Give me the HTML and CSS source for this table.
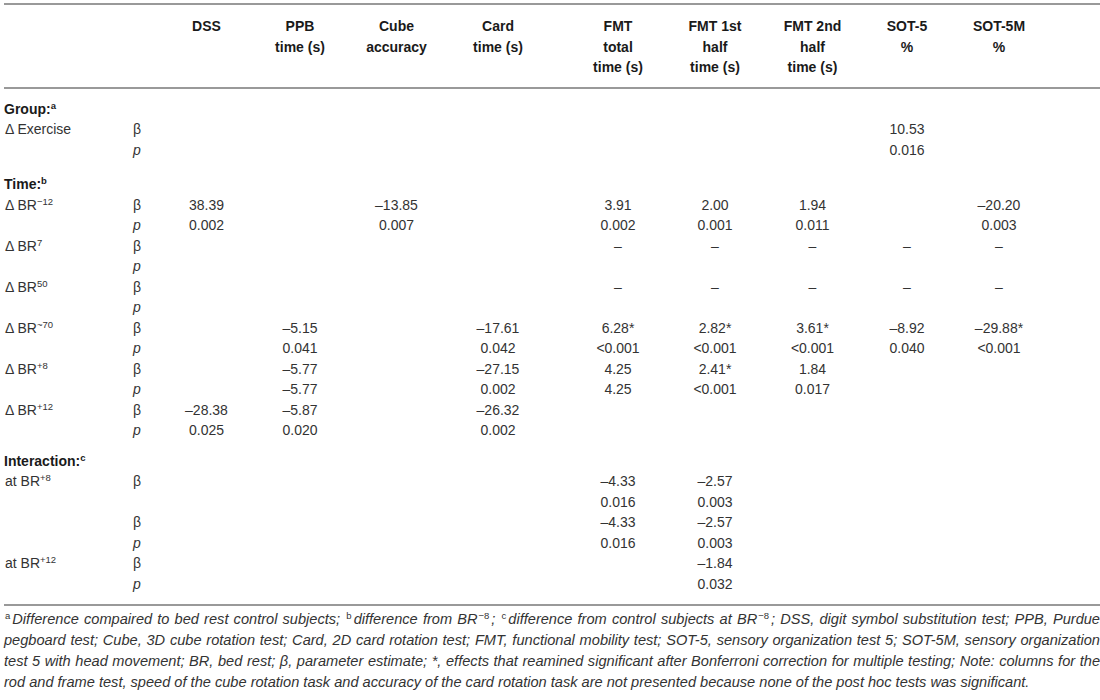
FILE: index.html
```html
<!DOCTYPE html>
<html lang="en">
<head>
    <meta charset="UTF-8">
    <meta name="viewport" content="width=device-width, initial-scale=1.0">
    <title>Post hoc tests</title>
    <link rel="stylesheet" href="styles.css">
</head>
<body>
    <div class="wrap">
        <table class="stats">
            <colgroup>
                <col class="c-lbl">
                <col class="c-sym">
                <col class="c-dss">
                <col class="c-ppb">
                <col class="c-cube">
                <col class="c-card">
                <col class="c-fmt">
                <col class="c-fmt1">
                <col class="c-fmt2">
                <col class="c-sot">
                <col class="c-sotm">
                <col class="c-fill">
            </colgroup>
            <thead>
                <tr>
                    <th></th>
                    <th></th>
                    <th>DSS</th>
                    <th>PPB<br>time (s)</th>
                    <th>Cube<br>accuracy</th>
                    <th>Card<br>time (s)</th>
                    <th>FMT<br>total<br>time (s)</th>
                    <th>FMT 1st<br>half<br>time (s)</th>
                    <th>FMT 2nd<br>half<br>time (s)</th>
                    <th>SOT-5<br>%</th>
                    <th>SOT-5M<br>%</th>
                    <th></th>
                </tr>
            </thead>
            <tbody>
                <!-- Group -->
                <tr><td class="sec first" colspan="12">Group:<sup>a</sup></td></tr>
                <tr><td class="lbl">Δ Exercise</td><td class="sym">β</td><td></td><td></td><td></td><td></td><td></td><td></td><td></td><td>10.53</td><td></td><td></td></tr>
                <tr><td class="lbl"></td><td class="sym"><i>p</i></td><td></td><td></td><td></td><td></td><td></td><td></td><td></td><td>0.016</td><td></td><td></td></tr>

                <!-- Time -->
                <tr><td class="sec" colspan="12">Time:<sup>b</sup></td></tr>
                <tr><td class="lbl">Δ BR<sup>−12</sup></td><td class="sym">β</td><td>38.39</td><td></td><td>–13.85</td><td></td><td>3.91</td><td>2.00</td><td>1.94</td><td></td><td>–20.20</td><td></td></tr>
                <tr><td class="lbl"></td><td class="sym"><i>p</i></td><td>0.002</td><td></td><td>0.007</td><td></td><td>0.002</td><td>0.001</td><td>0.011</td><td></td><td>0.003</td><td></td></tr>
                <tr><td class="lbl">Δ BR<sup>7</sup></td><td class="sym">β</td><td></td><td></td><td></td><td></td><td>–</td><td>–</td><td>–</td><td>–</td><td>–</td><td></td></tr>
                <tr><td class="lbl"></td><td class="sym"><i>p</i></td><td></td><td></td><td></td><td></td><td></td><td></td><td></td><td></td><td></td><td></td></tr>
                <tr><td class="lbl">Δ BR<sup>50</sup></td><td class="sym">β</td><td></td><td></td><td></td><td></td><td>–</td><td>–</td><td>–</td><td>–</td><td>–</td><td></td></tr>
                <tr><td class="lbl"></td><td class="sym"><i>p</i></td><td></td><td></td><td></td><td></td><td></td><td></td><td></td><td></td><td></td><td></td></tr>
                <tr><td class="lbl">Δ BR<sup>~70</sup></td><td class="sym">β</td><td></td><td>–5.15</td><td></td><td>–17.61</td><td>6.28*</td><td>2.82*</td><td>3.61*</td><td>–8.92</td><td>–29.88*</td><td></td></tr>
                <tr><td class="lbl"></td><td class="sym"><i>p</i></td><td></td><td>0.041</td><td></td><td>0.042</td><td>&lt;0.001</td><td>&lt;0.001</td><td>&lt;0.001</td><td>0.040</td><td>&lt;0.001</td><td></td></tr>
                <tr><td class="lbl">Δ BR<sup>+8</sup></td><td class="sym">β</td><td></td><td>–5.77</td><td></td><td>–27.15</td><td>4.25</td><td>2.41*</td><td>1.84</td><td></td><td></td><td></td></tr>
                <tr><td class="lbl"></td><td class="sym"><i>p</i></td><td></td><td>–5.77</td><td></td><td>0.002</td><td>4.25</td><td>&lt;0.001</td><td>0.017</td><td></td><td></td><td></td></tr>
                <tr><td class="lbl">Δ BR<sup>+12</sup></td><td class="sym">β</td><td>–28.38</td><td>–5.87</td><td></td><td>–26.32</td><td></td><td></td><td></td><td></td><td></td><td></td></tr>
                <tr><td class="lbl"></td><td class="sym"><i>p</i></td><td>0.025</td><td>0.020</td><td></td><td>0.002</td><td></td><td></td><td></td><td></td><td></td><td></td></tr>

                <!-- Interaction -->
                <tr><td class="sec inter" colspan="12">Interaction:<sup>c</sup></td></tr>
                <tr><td class="lbl">at BR<sup>+8</sup></td><td class="sym">β</td><td></td><td></td><td></td><td></td><td>–4.33</td><td>–2.57</td><td></td><td></td><td></td><td></td></tr>
                <tr><td class="lbl"></td><td class="sym"></td><td></td><td></td><td></td><td></td><td>0.016</td><td>0.003</td><td></td><td></td><td></td><td></td></tr>
                <tr><td class="lbl"></td><td class="sym">β</td><td></td><td></td><td></td><td></td><td>–4.33</td><td>–2.57</td><td></td><td></td><td></td><td></td></tr>
                <tr><td class="lbl"></td><td class="sym"><i>p</i></td><td></td><td></td><td></td><td></td><td>0.016</td><td>0.003</td><td></td><td></td><td></td><td></td></tr>
                <tr><td class="lbl">at BR<sup>+12</sup></td><td class="sym">β</td><td></td><td></td><td></td><td></td><td></td><td>–1.84</td><td></td><td></td><td></td><td></td></tr>
                <tr class="last"><td class="lbl"></td><td class="sym"><i>p</i></td><td></td><td></td><td></td><td></td><td></td><td>0.032</td><td></td><td></td><td></td><td></td></tr>
            </tbody>
        </table>

        <!-- 注释 -->
        <p class="notes"><sup>a</sup>Difference compaired to bed rest control subjects; <sup>b</sup>difference from BR<sup>−8</sup>; <sup>c</sup>difference from control subjects at BR<sup>−8</sup>; DSS, digit symbol substitution test; PPB, Purdue pegboard test; Cube, 3D cube rotation test; Card, 2D card rotation test; FMT, functional mobility test; SOT-5, sensory organization test 5; SOT-5M, sensory organization test 5 with head movement; BR, bed rest; β, parameter estimate; *, effects that reamined significant after Bonferroni correction for multiple testing; Note: columns for the rod and frame test, speed of the cube rotation task and accuracy of the card rotation task are not presented because none of the post hoc tests was significant.</p>
    </div>
</body>
</html>
```

FILE: styles.css
```css
body {
    margin: 0;
    font-family: "Liberation Sans", Arial, sans-serif;
    font-size: 14px;
    color: #333;
    background-color: #fff;
}

.wrap {
    width: 1096px;
    margin-left: 4px;
    padding-top: 3px;
}

/* 表格 */
.stats {
    width: 1096px;
    border-collapse: collapse;
    table-layout: fixed;
}

.c-lbl { width: 124px; }
.c-sym { width: 32px; }
.c-dss { width: 93px; }
.c-ppb { width: 94px; }
.c-cube { width: 99px; }
.c-card { width: 104px; }
.c-fmt { width: 116px; }
.c-fmt1 { width: 98px; }
.c-fmt2 { width: 97px; }
.c-sot { width: 92px; }
.c-sotm { width: 92px; }
.c-fill { width: 55px; }

.stats th,
.stats td {
    padding: 0;
    line-height: 20.5px;
    text-align: center;
    vertical-align: top;
    white-space: nowrap;
}

.stats td:nth-child(7),
.stats th:nth-child(7) {
    padding-left: 20px;
}

.stats thead th {
    padding-top: 11px;
    padding-bottom: 9px;
    border-top: 2px solid #999;
    border-bottom: 2px solid #999;
    font-weight: bold;
    color: #1a1a1a;
}

.stats td.lbl {
    text-align: left;
    padding-left: 1px;
}

.stats td.sym {
    text-align: left;
    padding-left: 5px;
}

.stats td.sec {
    text-align: left;
    padding-top: 14px;
    font-weight: bold;
    color: #1a1a1a;
}

.stats td.sec.first {
    padding-top: 10px;
}

.stats td.sec.inter {
    padding-top: 10px;
}

.stats tr.last td {
    padding-bottom: 10px;
}

sup {
    font-size: 9.5px;
    line-height: 0;
    vertical-align: 5px;
}

/* 注释 */
.notes {
    margin: 0;
    padding-top: 3px;
    border-top: 2px solid #999;
    font-size: 14.6px;
    font-style: italic;
    line-height: 21px;
    text-align: justify;
    color: #333;
}

.notes sup {
    font-style: normal;
    margin: 0 2px 0 1px;
}
```
